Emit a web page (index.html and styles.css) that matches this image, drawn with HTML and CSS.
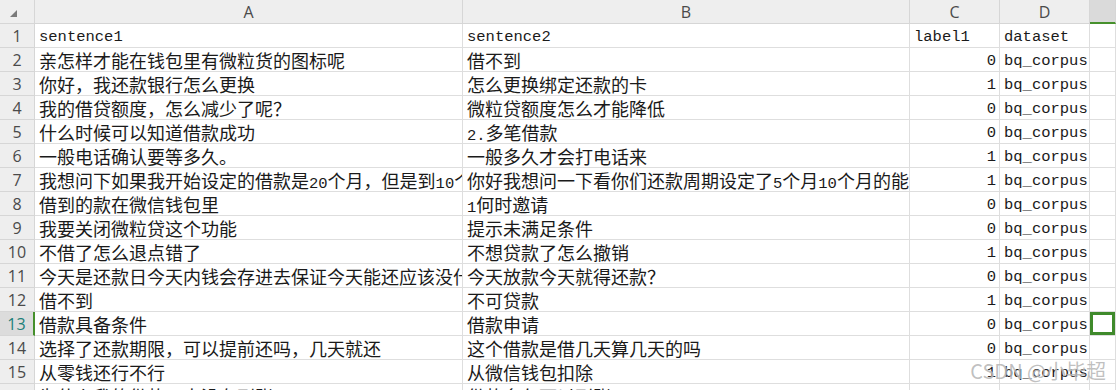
FILE: index.html
```html
<!DOCTYPE html>
<html lang="zh-CN">
<head>
    <meta charset="UTF-8">
    <title>bq_corpus</title>
    <link rel="stylesheet" href="styles.css">
</head>
<body>
    <div class="sheet">
        <!-- column headers -->
        <div class="corner"><span class="tri"></span></div>
        <div class="col-head">A</div>
        <div class="col-head">B</div>
        <div class="col-head">C</div>
        <div class="col-head">D</div>
        <div class="col-head current"></div>

        <div class="row-head">1</div>
        <div class="cell en">sentence1</div>
        <div class="cell en">sentence2</div>
        <div class="cell en">label1</div>
        <div class="cell en">dataset</div>
        <div class="cell"></div>

        <div class="row-head">2</div>
        <div class="cell">亲怎样才能在钱包里有微粒货的图标呢</div>
        <div class="cell">借不到</div>
        <div class="cell num">0</div>
        <div class="cell en">bq_corpus</div>
        <div class="cell"></div>

        <div class="row-head">3</div>
        <div class="cell">你好，我还款银行怎么更换</div>
        <div class="cell">怎么更换绑定还款的卡</div>
        <div class="cell num">1</div>
        <div class="cell en">bq_corpus</div>
        <div class="cell"></div>

        <div class="row-head">4</div>
        <div class="cell">我的借贷额度，怎么减少了呢？</div>
        <div class="cell">微粒贷额度怎么才能降低</div>
        <div class="cell num">0</div>
        <div class="cell en">bq_corpus</div>
        <div class="cell"></div>

        <div class="row-head">5</div>
        <div class="cell">什么时候可以知道借款成功</div>
        <div class="cell"><span class="en">2.</span>多笔借款</div>
        <div class="cell num">0</div>
        <div class="cell en">bq_corpus</div>
        <div class="cell"></div>

        <div class="row-head">6</div>
        <div class="cell">一般电话确认要等多久。</div>
        <div class="cell">一般多久才会打电话来</div>
        <div class="cell num">1</div>
        <div class="cell en">bq_corpus</div>
        <div class="cell"></div>

        <div class="row-head">7</div>
        <div class="cell">我想问下如果我开始设定的借款是<span class="en">20</span>个月，但是到<span class="en">10</span>个月的时候我想提前还清可以吗</div>
        <div class="cell">你好我想问一下看你们还款周期设定了<span class="en">5</span>个月<span class="en">10</span>个月的能不能改</div>
        <div class="cell num">1</div>
        <div class="cell en">bq_corpus</div>
        <div class="cell"></div>

        <div class="row-head">8</div>
        <div class="cell">借到的款在微信钱包里</div>
        <div class="cell"><span class="en">1</span>何时邀请</div>
        <div class="cell num">0</div>
        <div class="cell en">bq_corpus</div>
        <div class="cell"></div>

        <div class="row-head">9</div>
        <div class="cell">我要关闭微粒贷这个功能</div>
        <div class="cell">提示未满足条件</div>
        <div class="cell num">0</div>
        <div class="cell en">bq_corpus</div>
        <div class="cell"></div>

        <div class="row-head">10</div>
        <div class="cell">不借了怎么退点错了</div>
        <div class="cell">不想贷款了怎么撤销</div>
        <div class="cell num">1</div>
        <div class="cell en">bq_corpus</div>
        <div class="cell"></div>

        <div class="row-head">11</div>
        <div class="cell">今天是还款日今天内钱会存进去保证今天能还应该没什么问题吧</div>
        <div class="cell">今天放款今天就得还款？</div>
        <div class="cell num">0</div>
        <div class="cell en">bq_corpus</div>
        <div class="cell"></div>

        <div class="row-head">12</div>
        <div class="cell">借不到</div>
        <div class="cell">不可贷款</div>
        <div class="cell num">1</div>
        <div class="cell en">bq_corpus</div>
        <div class="cell"></div>

        <div class="row-head current">13</div>
        <div class="cell">借款具备条件</div>
        <div class="cell">借款申请</div>
        <div class="cell num">0</div>
        <div class="cell en">bq_corpus</div>
        <div class="cell active"></div>

        <div class="row-head">14</div>
        <div class="cell">选择了还款期限，可以提前还吗，几天就还</div>
        <div class="cell">这个借款是借几天算几天的吗</div>
        <div class="cell num">0</div>
        <div class="cell en">bq_corpus</div>
        <div class="cell"></div>

        <div class="row-head">15</div>
        <div class="cell">从零钱还行不行</div>
        <div class="cell">从微信钱包扣除</div>
        <div class="cell num">1</div>
        <div class="cell en">bq_corpus</div>
        <div class="cell"></div>

        <div class="row-head">16</div>
        <div class="cell">为什么我的借款一直没有到账</div>
        <div class="cell">借款多久可以到账</div>
        <div class="cell num">0</div>
        <div class="cell en">bq_corpus</div>
        <div class="cell"></div>
    </div>

    <div class="watermark">CSDN @小毕超</div>
</body>
</html>
```

FILE: styles.css
```css
body {
    margin: 0;
    height: 390px;
    overflow: hidden;
    background: #fff;
    color: #1a1a1a;
    font-family: "Noto Sans CJK SC", sans-serif;
    position: relative;
}

.sheet {
    display: grid;
    grid-template-columns: 35px 428px 447px 90px 90px 1fr;
    grid-auto-rows: 24px;
}

/* every grid cell draws its own right and bottom line */
.sheet > div {
    box-sizing: border-box;
    border-right: 1px solid #dedede;
    border-bottom: 1px solid #dedede;
    overflow: hidden;
    white-space: nowrap;
}

.corner,
.col-head,
.row-head {
    background: #eeeeee;
    color: #4a4a4a;
    font-family: "Open Sans", "Liberation Sans", sans-serif;
    font-size: 16px;
    display: flex;
    align-items: center;
    justify-content: center;
}

.sheet > .corner,
.sheet > .col-head,
.sheet > .row-head {
    border-color: #d6d6d6;
}

.corner {
    align-items: flex-start;
    justify-content: flex-start;
}

.tri {
    width: 0;
    height: 0;
    margin: 10px 0 0 10px;
    border-left: 7px solid transparent;
    border-bottom: 7px solid #7a7a7a;
}

.sheet > .col-head.current {
    background: #dadada;
    border-bottom: 2px solid #46902c;
}

.sheet > .row-head.current {
    background: #dcdcdc;
    color: #1c7f78;
    border-right: 2px solid #46902c;
}

.cell {
    font-size: 18px;
    line-height: 23px;
    padding: 1px 3px 0 4px;
}

.en,
.num {
    font-family: "Liberation Mono", monospace;
    font-size: 15.5px;
}

.cell.en,
.cell.num {
    padding-top: 3px;
    line-height: 20px;
}

.num {
    text-align: right;
    padding-right: 3px;
}

.cell.active {
    box-shadow: inset 0 0 0 3px #3f8a2b;
}

.watermark {
    position: absolute;
    right: 10px;
    bottom: 5px;
    font-family: "Noto Sans CJK SC", sans-serif;
    font-size: 20px;
    color: rgba(150, 150, 150, 0.6);
    text-shadow: 0 0 1px rgba(255, 255, 255, 0.8);
    line-height: 28px;
}
```
